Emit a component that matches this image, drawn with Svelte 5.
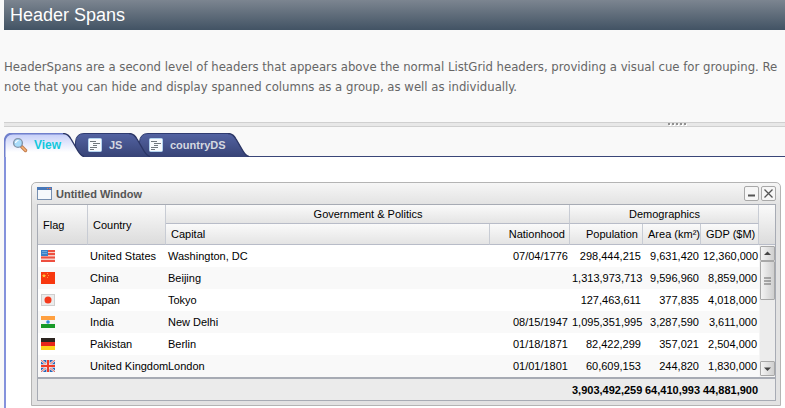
<script>
	const rows = [
		{ flag: 'us', country: 'United States', capital: 'Washington, DC', nationhood: '07/04/1776', population: 298444215, area: 9631420, gdp: 12360000 },
		{ flag: 'cn', country: 'China', capital: 'Beijing', nationhood: '', population: 1313973713, area: 9596960, gdp: 8859000 },
		{ flag: 'jp', country: 'Japan', capital: 'Tokyo', nationhood: '', population: 127463611, area: 377835, gdp: 4018000 },
		{ flag: 'in', country: 'India', capital: 'New Delhi', nationhood: '08/15/1947', population: 1095351995, area: 3287590, gdp: 3611000 },
		{ flag: 'de', country: 'Pakistan', capital: 'Berlin', nationhood: '01/18/1871', population: 82422299, area: 357021, gdp: 2504000 },
		{ flag: 'gb', country: 'United Kingdom', capital: 'London', nationhood: '01/01/1801', population: 60609153, area: 244820, gdp: 1830000 },
	];

	const sum = { population: 3903492259, area: 64410993, gdp: 44881900 };

	const tabs = ['View', 'JS', 'countryDS'];
	let active = $state('View');

	const format = (n) => n.toLocaleString('en-US');
</script>

{#snippet flag(code)}
	<svg class="flag" viewBox="0 0 14 12" aria-hidden="true">
		{#if code === 'us'}
			<rect width="14" height="12" fill="#f6cfc8" />
			<path d="M0 1h14M0 4h14M0 7.5h14M0 11h14" stroke="#ee5040" stroke-width="2" />
			<rect width="7" height="6" fill="#3a80c8" />
			<path d="M1 1.5h5M1 3.5h5" stroke="#6ea8dc" />
		{:else if code === 'cn'}
			<rect width="14" height="12" fill="#f8380f" />
			<path d="M3 1.5l.6 1.4 1.5.1-1.1 1 .4 1.5L3 4.7l-1.4.8.4-1.5-1.1-1 1.5-.1z" fill="#ffc83c" />
			<path d="M6 1h1v1h-1zM7 3h1v1h-1zM6 5h1v1h-1z" fill="#ff9a30" />
		{:else if code === 'jp'}
			<rect width="14" height="12" fill="#cfcfcf" />
			<rect x="1" y="1" width="12" height="10" fill="#ececec" />
			<circle cx="7" cy="6" r="3.5" fill="#f5391c" />
		{:else if code === 'in'}
			<rect width="14" height="12" fill="#f4f4f4" />
			<rect width="14" height="4" fill="#ffa040" />
			<rect y="8" width="14" height="4" fill="#189a28" />
			<circle cx="7" cy="6" r="1.8" fill="#2e86d8" />
		{:else if code === 'de'}
			<rect width="14" height="4" fill="#2c2420" />
			<rect y="4" width="14" height="4" fill="#e8261c" />
			<rect y="8" width="14" height="4" fill="#ffd21c" />
		{:else}
			<rect width="14" height="12" fill="#2667b8" />
			<path d="M0 0l14 12M14 0L0 12" stroke="#e0e6f4" stroke-width="2.4" />
			<path d="M0 0l14 12M14 0L0 12" stroke="#ee6a58" stroke-width="1" />
			<path d="M7 0v12M0 6h14" stroke="#f4e4e4" stroke-width="3.4" />
			<path d="M7 0v12M0 6h14" stroke="#f03c28" stroke-width="2" />
		{/if}
	</svg>
{/snippet}

{#snippet tabShape(name)}
	{@const w = name === 'View' ? 80 : name === 'JS' ? 75 : 110}
	<svg class="shape" width={w} height="24" viewBox="0 0 {w} 24" aria-hidden="true">
		<defs>
			<linearGradient id="fill-{name}" x2="0" y2="1">
				{#if name === active}
					<stop offset="0" stop-color="#c3cdf8" />
					<stop offset="0.8" stop-color="#ffffff" />
				{:else}
					<stop offset="0" stop-color="#5363a2" />
					<stop offset="1" stop-color="#374376" />
				{/if}
			</linearGradient>
		</defs>
		<path
			d="M0.5 24V9Q1 0.5 9 0.5H{w - 21}Q{w - 16} 0.5 {w - 13} 6L{w - 6} 18Q{w - 3} 23 {w} 24Z"
			fill="url(#fill-{name})"
		/>
		<path
			d="M0.5 24V9Q1 0.5 9 0.5H{w - 21}"
			fill="none"
			stroke={name === active ? '#7080cc' : '#2f3b70'}
			stroke-width={name === active ? 2 : 1}
		/>
		<path
			d="M{w - 21} 0.5Q{w - 16} 0.5 {w - 13} 6L{w - 6} 18Q{w - 3} 23 {w} 23.5"
			fill="none"
			stroke="#2b3665"
			stroke-width="1.4"
		/>
	</svg>
{/snippet}

<div class="page">
	<h1>Header Spans</h1>
	<p class="description">
		HeaderSpans are a second level of headers that appears above the normal ListGrid headers, providing a visual cue for grouping. Re<br />
		note that you can hide and display spanned columns as a group, as well as individually.
	</p>

	<div class="splitter">
		<svg width="20" height="3" viewBox="0 0 20 3" aria-hidden="true">
			<path d="M1 2h19" stroke="#fff" stroke-width="2" stroke-dasharray="2 2" />
			<path d="M0 1h19" stroke="#909090" stroke-width="2" stroke-dasharray="2 2" />
		</svg>
	</div>

	<div class="tabs" role="tablist">
		{#each tabs as tab}
			<button role="tab" class={tab} class:active={tab === active} aria-selected={tab === active} onclick={() => (active = tab)}>
				{@render tabShape(tab)}
				{#if tab === 'View'}
					<svg class="icon" viewBox="0 0 16 16" aria-hidden="true">
						<path d="M9.5 9.5l4 4" stroke="#c07848" stroke-width="3.4" stroke-linecap="round" />
						<path d="M10 10l3.5 3.5" stroke="#f4b478" stroke-width="1.6" stroke-linecap="round" />
						<circle cx="6" cy="6" r="4.4" fill="#a8dcfa" stroke="#8494a8" stroke-width="1.4" />
						<path d="M3.5 6Q4 3.5 6.5 3.5" fill="none" stroke="#fff" stroke-width="1.2" />
					</svg>
				{:else}
					<svg class="icon" viewBox="0 0 16 16" aria-hidden="true">
						<rect x="1.5" y="1.5" width="13" height="13" rx="1" fill="#f8fbfe" stroke="#b4d4f0" />
						<path d="M3 4.5h6M6 6.5h7M6 8.5h4M3 10.5h7M3 12.5h4" stroke="#70787f" />
					</svg>
				{/if}
				<span>{tab}</span>
			</button>
		{/each}
	</div>

	<div class="pane">
		<section class="window">
			<header>
				<svg width="15" height="13" viewBox="0 0 15 13" aria-hidden="true">
					<rect x="0.5" y="0.5" width="14" height="12" fill="#f6f9fc" stroke="#7890b0" />
					<path d="M0 1.5h15" stroke="#4878b8" stroke-width="3" />
					<path d="M10 1.5h1M12 1.5h2" stroke="#e07050" />
				</svg>
				<h2>Untitled Window</h2>
				<button aria-label="Minimize">
					<svg viewBox="0 0 13 13" aria-hidden="true"><path d="M3 8.5h7" stroke="#555" stroke-width="2" /></svg>
				</button>
				<button aria-label="Close">
					<svg viewBox="0 0 13 13" aria-hidden="true"><path d="M2.5 2.5l8 8M10.5 2.5l-8 8" stroke="#555" stroke-width="1.3" /></svg>
				</button>
			</header>

			<table>
				<colgroup>
					<col class="c-flag" />
					<col class="c-country" />
					<col />
					<col class="c-nationhood" />
					<col class="c-population" />
					<col class="c-area" />
					<col class="c-gdp" />
					<col class="c-scroll" />
				</colgroup>
				<thead>
					<tr>
						<th rowspan="2" class="tall">Flag</th>
						<th rowspan="2" class="tall">Country</th>
						<th colspan="2" class="span">Government &amp; Politics</th>
						<th colspan="3" class="span">Demographics</th>
						<td rowspan="2" class="tall corner"></td>
					</tr>
					<tr>
						<th>Capital</th>
						<th class="num">Nationhood</th>
						<th class="num">Population</th>
						<th class="num tight">Area (km²)</th>
						<th class="num">GDP ($M)</th>
					</tr>
				</thead>
				<tbody>
					{#each rows as row, i}
						<tr>
							<td>{@render flag(row.flag)}</td>
							<td>{row.country}</td>
							<td>{row.capital}</td>
							<td class="num">{row.nationhood}</td>
							<td class="num">{format(row.population)}</td>
							<td class="num">{format(row.area)}</td>
							<td class="num">{format(row.gdp)}</td>
							{#if i === 0}
								<td class="scroll" rowspan={rows.length}>
									<div class="scrollbar">
										<button aria-label="Scroll up">
											<svg viewBox="0 0 13 13" aria-hidden="true"><path d="M3 8L6.5 4.5 10 8z" fill="#444" /></svg>
										</button>
										<div class="thumb">
											<svg width="7" height="8" viewBox="0 0 7 8" aria-hidden="true">
												<path d="M0 1h7M0 4h7M0 7h7" stroke="#666" />
											</svg>
										</div>
										<div class="track"></div>
										<button aria-label="Scroll down">
											<svg viewBox="0 0 13 13" aria-hidden="true"><path d="M3 5.5L6.5 9 10 5.5z" fill="#444" /></svg>
										</button>
									</div>
								</td>
							{/if}
						</tr>
					{/each}
				</tbody>
				<tfoot>
					<tr>
						<td colspan="4"></td>
						<td class="num">{format(sum.population)}</td>
						<td class="num">{format(sum.area)}</td>
						<td class="num">{format(sum.gdp)}</td>
						<td></td>
					</tr>
				</tfoot>
			</table>
		</section>
	</div>
</div>

<style>
	:global(body) {
		background: #f9f9f9;
	}

	.page {
		display: flex;
		flex-direction: column;
		min-height: 100vh;
		box-sizing: border-box;
		padding-left: 4px;
		overflow: hidden;
		font-family: "Liberation Sans", Arial, sans-serif;
		font-size: 11px;
		color: #000;
	}

	h1 {
		margin: 0;
		padding-left: 6px;
		font-size: 18px;
		font-weight: normal;
		line-height: 30px;
		color: #fff;
		background: linear-gradient(#7c8590, #425364);
	}

	.description {
		margin: 27px 0 25px;
		font-family: "DejaVu Sans Condensed", "Lucida Grande", sans-serif;
		font-size: 13px;
		line-height: 20px;
		color: #666;
		white-space: nowrap;
	}

	.splitter {
		display: flex;
		justify-content: center;
		height: 3px;
		padding-left: 567px;
		border-top: 1px solid #d0d0d0;
		border-bottom: 1px solid #d0d0d0;
		background: #e8e8e8;
	}

	.tabs {
		display: flex;
		height: 24px;
		margin-top: 6px;
		box-shadow: inset 0 -1px #3a4678;
	}

	.tabs button {
		position: relative;
		display: flex;
		align-items: center;
		height: 24px;
		padding: 0 0 0 8px;
		border: 0;
		background: none;
		font: bold 11px "Liberation Sans", Arial, sans-serif;
		color: #d4d8e0;
	}

	.tabs .View {
		z-index: 3;
		width: 71px;
	}

	.tabs .JS {
		z-index: 2;
		width: 64px;
		padding-left: 12px;
	}

	.tabs .countryDS {
		z-index: 1;
		width: 110px;
		padding-left: 9px;
	}

	.tabs button.active {
		font-size: 12px;
		color: #12c8dc;
	}

	.shape {
		position: absolute;
		top: 0;
		left: 0;
	}

	.icon {
		position: relative;
		width: 16px;
		height: 16px;
		flex: none;
	}

	.tabs span {
		position: relative;
		margin-left: 6px;
	}

	.pane {
		flex: 1;
		padding: 25px 4px 3px 25px;
		border-left: 2px solid #8492dc;
		background: #fff;
	}

	.window {
		padding: 0 4px 4px 5px;
		border: 1px solid #b4b4b4;
		border-radius: 5px 5px 0 0;
		background: linear-gradient(#f6f6f6, #e2e2e2 22px);
	}

	.window header {
		display: flex;
		align-items: center;
		height: 21px;
	}

	h2 {
		flex: 1;
		margin: 0 0 0 4px;
		font-size: 11px;
		font-weight: bold;
		color: #555;
	}

	.window header button {
		width: 15px;
		height: 15px;
		margin-left: 2px;
		padding: 0;
		border: 1px solid #a8a8a8;
		border-radius: 2px;
		background: #f6f6f6;
	}

	button svg {
		display: block;
	}

	table {
		width: 100%;
		table-layout: fixed;
		border-collapse: separate;
		border-spacing: 0;
		border: 1px solid #a7abb4;
		background: #fff;
	}

	.c-flag {
		width: 50px;
	}

	.c-country {
		width: 78px;
	}

	.c-nationhood {
		width: 80px;
	}

	.c-population {
		width: 73px;
	}

	.c-area,
	.c-gdp {
		width: 58px;
	}

	.c-scroll {
		width: 16px;
	}

	th,
	td {
		box-sizing: border-box;
		padding: 0 2px;
		text-align: left;
		white-space: nowrap;
	}

	th {
		height: 21px;
		padding: 0 4px 0 5px;
		font-weight: normal;
		border-right: 1px solid #c8ccd4;
		border-bottom: 1px solid #b8bcc8;
		background: linear-gradient(#fafafa, #e4e4e4);
	}

	th.span {
		height: 19px;
		text-align: center;
	}

	.tall {
		background: linear-gradient(#fafafa, #dcdcdc);
	}

	.corner {
		border-bottom: 1px solid #b8bcc8;
	}

	.num {
		text-align: right;
	}

	th.tight {
		padding: 0;
	}

	tbody td {
		height: 22px;
	}

	tbody tr:nth-child(even) td {
		background: #f9f9f9;
	}

	.flag {
		display: block;
		width: 14px;
		height: 12px;
		margin-left: 1px;
	}

	.scroll {
		height: 132px;
		padding: 0 0 0 1px;
		background: #f4f4f4;
	}

	.scrollbar {
		display: flex;
		flex-direction: column;
		height: 130px;
	}

	.scrollbar button,
	.thumb {
		box-sizing: border-box;
		width: 15px;
		border: 1px solid #a8a8a8;
		border-radius: 1px;
		background: linear-gradient(90deg, #f4f4f4, #cfcfcf);
	}

	.scrollbar button {
		height: 15px;
		padding: 0;
	}

	.thumb {
		display: flex;
		align-items: center;
		justify-content: center;
		height: 39px;
	}

	.track {
		flex: 1;
		background: #ececec;
	}

	tfoot td {
		height: 23px;
		border-top: 2px solid #a7abb4;
		background: #ebebeb;
		font-weight: bold;
	}
</style>
